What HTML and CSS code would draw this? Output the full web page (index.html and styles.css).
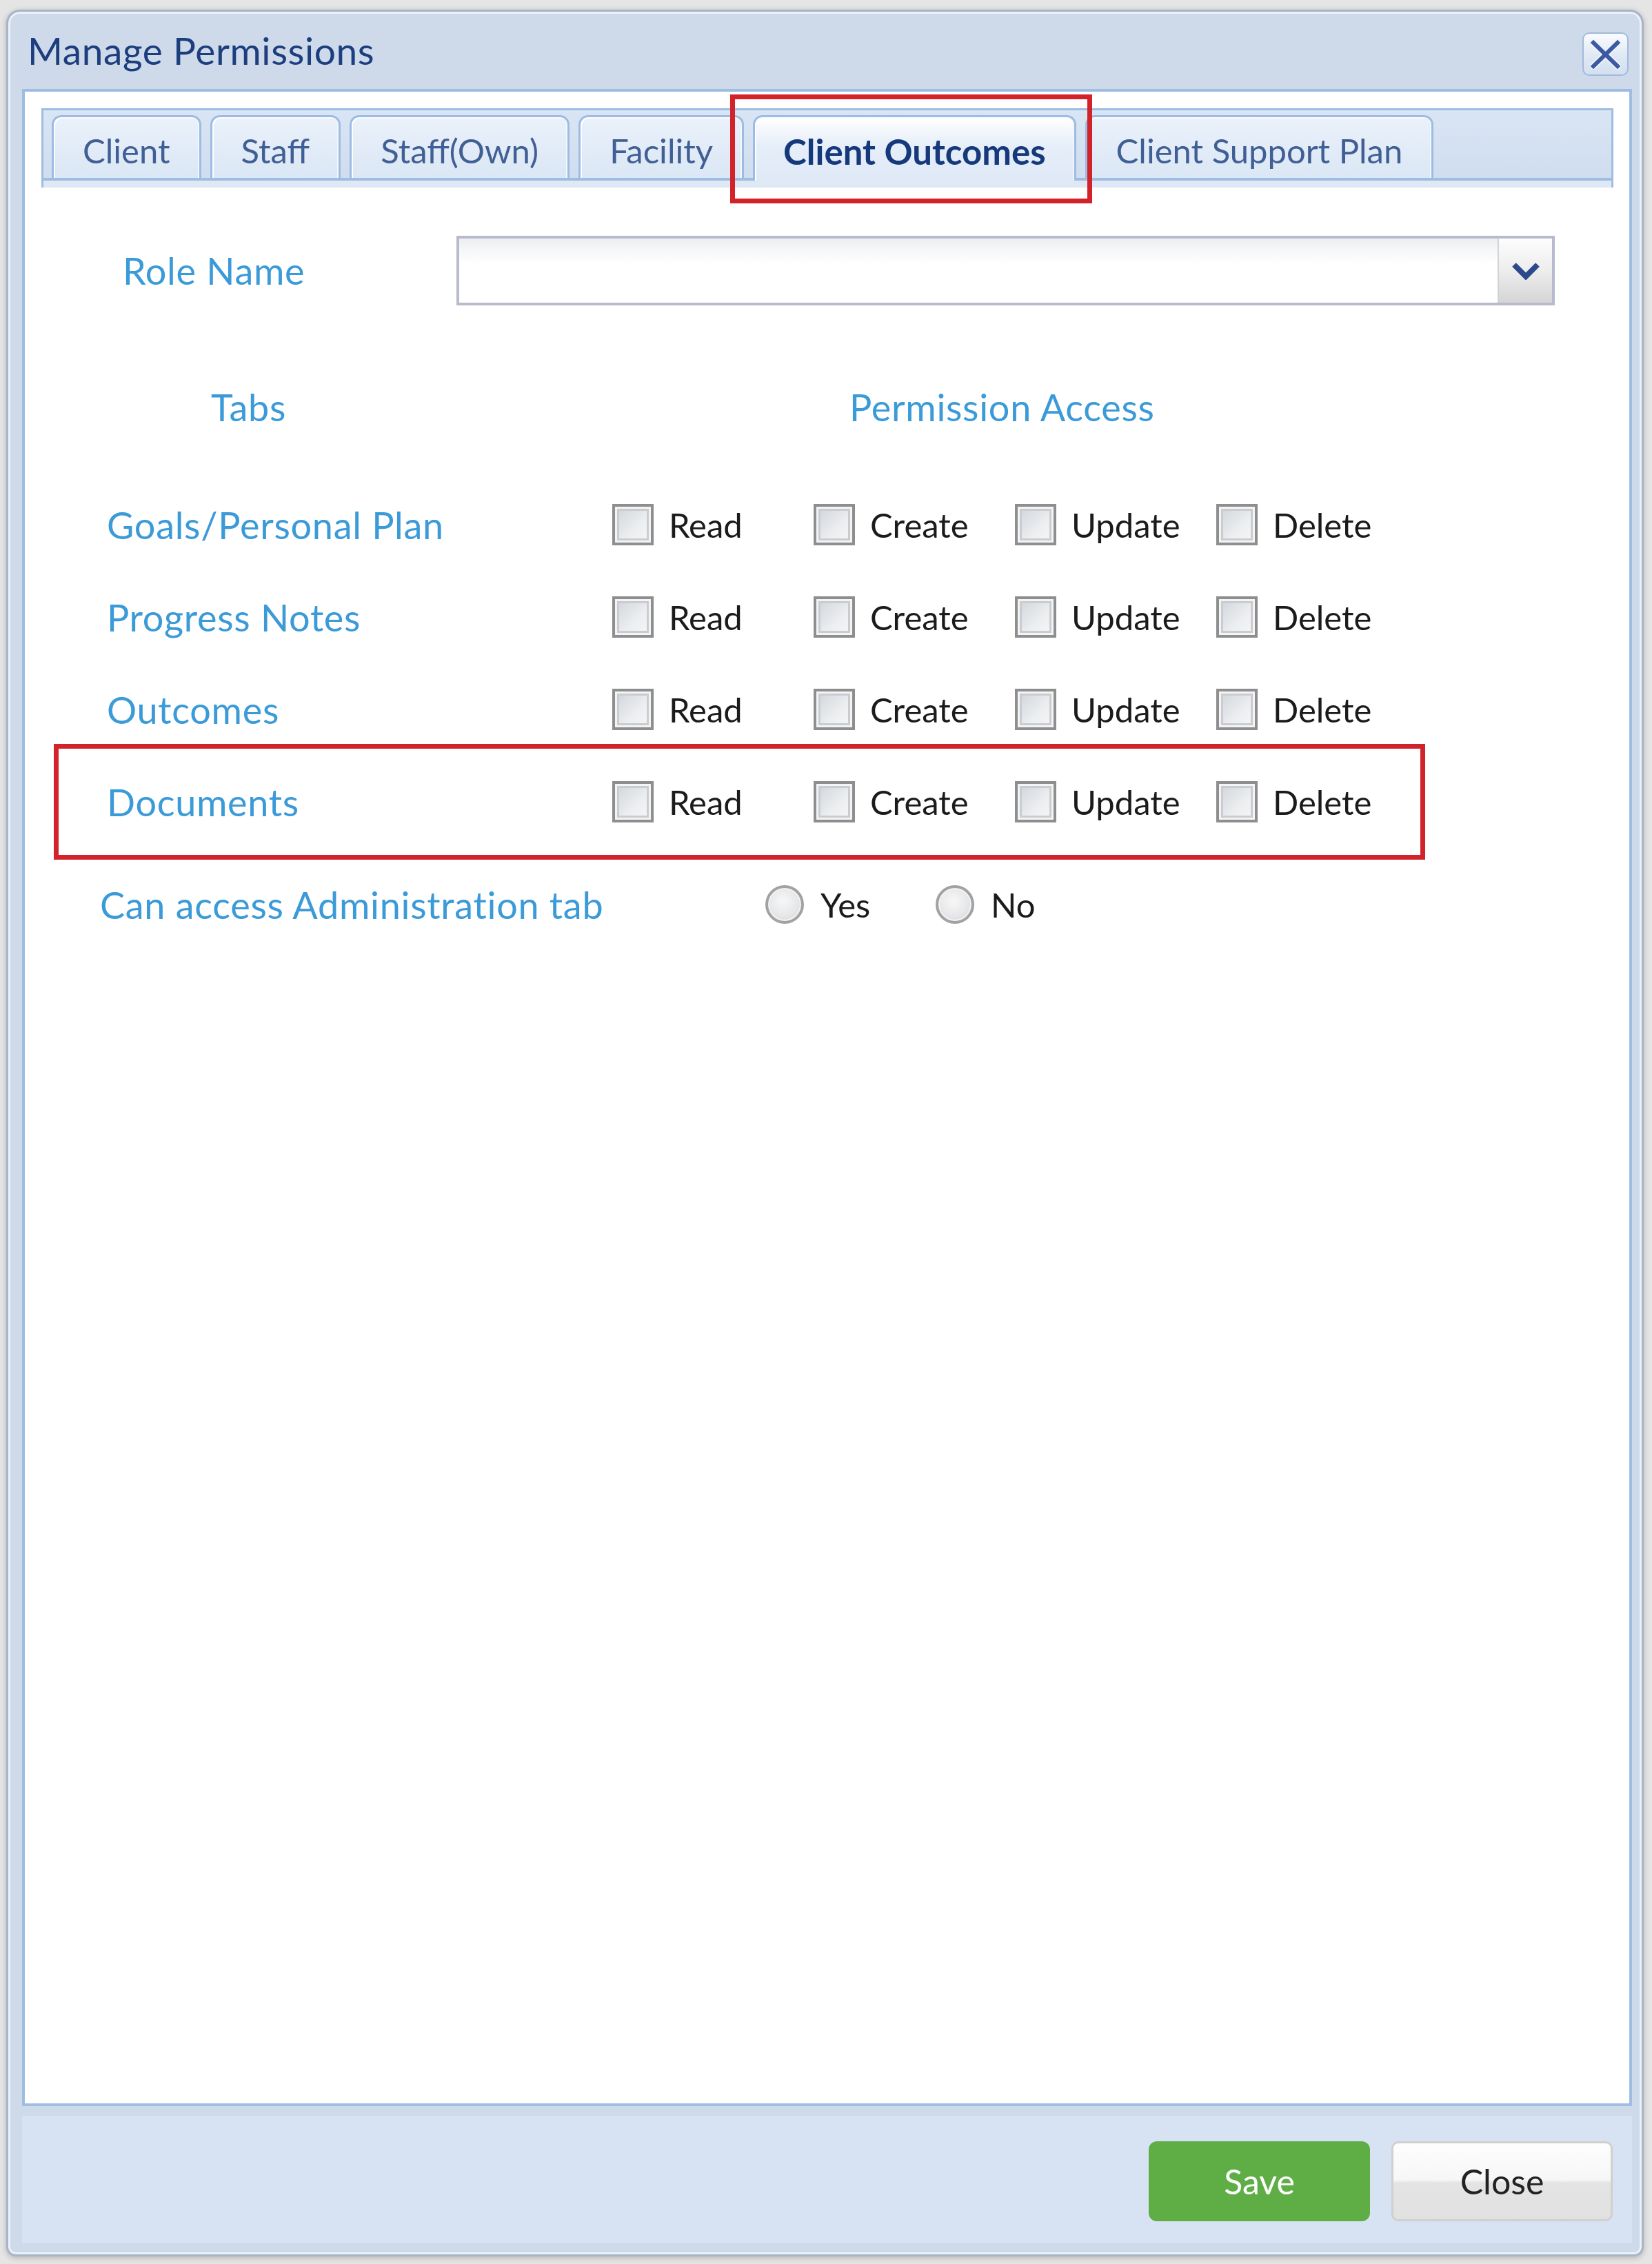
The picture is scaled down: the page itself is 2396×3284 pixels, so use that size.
FILE: index.html
```html
<!DOCTYPE html>
<html lang="en">
<head>
<meta charset="utf-8">
<title>Manage Permissions</title>
<link rel="stylesheet" href="styles.css">
</head>
<body>
<div class="window">
  <div class="titlebar">
    <span class="title">Manage Permissions</span>
    <button class="close-x" aria-label="Close">
      <svg width="67" height="63" viewBox="0 0 67 63">
        <path d="M16 15 L51 49 M51 15 L16 49" stroke="#eef3fa" stroke-width="10" stroke-linecap="round" fill="none"/>
        <path d="M16 15 L51 49 M51 15 L16 49" stroke="#3b5aa3" stroke-width="6" stroke-linecap="square" fill="none"/>
      </svg>
    </button>
  </div>

  <div class="panel">
    <div class="tabstrip">
      <div class="tabs">
        <div class="tab">Client</div>
        <div class="tab">Staff</div>
        <div class="tab">Staff(Own)</div>
        <div class="tab">Facility</div>
        <div class="tab active">Client Outcomes</div>
        <div class="tab">Client Support Plan</div>
      </div>
      <div class="band"></div>
    </div>

    <div class="role-row">
      <span class="role-label">Role Name</span>
      <div class="combo">
        <div class="combo-input"></div>
        <div class="combo-trigger">
          <svg width="44" height="26" viewBox="0 0 44 26">
            <path d="M5 4 L22 21 L39 4" stroke="#2c4a8b" stroke-width="8" fill="none" stroke-linejoin="miter"/>
          </svg>
        </div>
      </div>
    </div>

    <div class="header-row">
      <span class="hdr-tabs">Tabs</span>
      <span class="hdr-perm">Permission Access</span>
    </div>

    <div class="perm-row">
      <span class="perm-name">Goals/Personal Plan</span>
      <div class="perm-opts">
        <label class="opt"><span class="cb"></span>Read</label>
        <label class="opt"><span class="cb"></span>Create</label>
        <label class="opt"><span class="cb"></span>Update</label>
        <label class="opt"><span class="cb"></span>Delete</label>
      </div>
    </div>
    <div class="perm-row">
      <span class="perm-name">Progress Notes</span>
      <div class="perm-opts">
        <label class="opt"><span class="cb"></span>Read</label>
        <label class="opt"><span class="cb"></span>Create</label>
        <label class="opt"><span class="cb"></span>Update</label>
        <label class="opt"><span class="cb"></span>Delete</label>
      </div>
    </div>
    <div class="perm-row">
      <span class="perm-name">Outcomes</span>
      <div class="perm-opts">
        <label class="opt"><span class="cb"></span>Read</label>
        <label class="opt"><span class="cb"></span>Create</label>
        <label class="opt"><span class="cb"></span>Update</label>
        <label class="opt"><span class="cb"></span>Delete</label>
      </div>
    </div>
    <div class="perm-row highlight">
      <span class="perm-name">Documents</span>
      <div class="perm-opts">
        <label class="opt"><span class="cb"></span>Read</label>
        <label class="opt"><span class="cb"></span>Create</label>
        <label class="opt"><span class="cb"></span>Update</label>
        <label class="opt"><span class="cb"></span>Delete</label>
      </div>
    </div>

    <div class="admin-row">
      <span class="admin-label">Can access Administration tab</span>
      <label class="radio-opt yes"><span class="radio"></span>Yes</label>
      <label class="radio-opt"><span class="radio"></span>No</label>
    </div>
  </div>

  <div class="footer">
    <button class="btn btn-save">Save</button>
    <button class="btn btn-close">Close</button>
  </div>
</div>
</body>
</html>
```

FILE: styles.css
```css
html, body {
  margin: 0;
  padding: 0;
}

body {
  background: #e5e5e5;
  font-family: Lato, "Open Sans", sans-serif;
  width: 2396px;
  height: 3284px;
  overflow: hidden;
}

.window {
  box-sizing: border-box;
  width: 2375px;
  height: 3259px;
  margin: 14px 0 0 9px;
  border: 3px solid #a7b5ca;
  border-radius: 20px 20px 14px 14px;
  background: #cedae9;
  box-shadow: inset 0 0 0 3px #ecf1f8, 0 2px 8px rgba(0, 0, 0, 0.22);
  display: flex;
  flex-direction: column;
}

/* ---------- title bar ---------- */
.titlebar {
  height: 112px;
  flex: none;
  display: flex;
  align-items: center;
  padding: 0 19px 0 28px;
}

.title {
  flex: 1;
  font-size: 55px;
  letter-spacing: 0.6px;
  color: #1c3e7e;
  line-height: 1.2;
}

.close-x {
  align-self: flex-start;
  margin-top: 30px;
  box-sizing: border-box;
  width: 67px;
  height: 63px;
  padding: 0;
  border: 2px solid #a3badb;
  border-radius: 10px;
  background: linear-gradient(#fafcfe, #dfe8f4 55%, #d3e0f0);
  display: flex;
  align-items: center;
  justify-content: center;
  overflow: hidden;
}

.close-x svg {
  display: block;
  flex: none;
}

/* ---------- panel ---------- */
.panel {
  flex: 1;
  margin: 0 14px 0 20px;
  border: 4px solid #9ebde3;
  background: #fff;
  display: flex;
  flex-direction: column;
}

.tabstrip {
  margin: 24px 23px 0 24px;
  border: 3px solid #9ebde3;
  border-bottom: 0;
  background: linear-gradient(#d9e5f4, #cfdcee);
}

.tabs {
  height: 91px;
  padding: 7px 0 0 12px;
  display: flex;
  align-items: flex-end;
}

.tab {
  box-sizing: border-box;
  height: 91px;
  padding: 8px 42px 0;
  margin-right: 13px;
  border: 3px solid #9dbce3;
  border-bottom: 0;
  border-radius: 14px 14px 0 0;
  background: linear-gradient(#eaf1fa, #dbe7f5);
  box-shadow: inset 2px 2px 0 #fbfdff, inset -2px 0 0 #f3f7fc;
  font-size: 49px;
  color: #405f95;
  display: flex;
  align-items: center;
  white-space: nowrap;
}

.tab.active {
  position: relative;
  z-index: 1;
  height: 95px;
  margin-bottom: -4px;
  padding: 6px 41px 0;
  background: linear-gradient(#ffffff, #e6eef9 45%, #dfe9f6);
  font-weight: bold;
  font-size: 51px;
  color: #15397b;
}

.tab.active::after {
  content: "";
  position: absolute;
  left: -36px;
  right: -26px;
  top: -33px;
  bottom: -33px;
  border: 7px solid #d2232a;
  pointer-events: none;
}

.band {
  height: 10px;
  border-top: 4px solid #9ebde3;
  background: #dfe9f6;
}

/* ---------- role ---------- */
.role-row {
  margin-top: 70px;
  height: 101px;
  padding-left: 142px;
  display: flex;
  align-items: center;
}

.role-label,
.header-row,
.perm-name,
.admin-label {
  font-size: 54px;
  letter-spacing: 0.7px;
  color: #3b9ad8;
}

.role-label {
  width: 484px;
  flex: none;
}

.combo {
  flex: 1;
  margin-right: 108px;
  box-sizing: border-box;
  height: 101px;
  border: 4px solid #b7bbcd;
  display: flex;
  background: linear-gradient(#eceff1, #ffffff 36px);
}

.combo-input {
  flex: 1;
}

.combo-trigger {
  width: 77px;
  border-left: 2px solid #cfd2d8;
  background: linear-gradient(#fdfdfd, #ededed 50%, #d5d5d5);
  display: flex;
  align-items: center;
  justify-content: center;
}

.combo-trigger svg {
  display: block;
}

/* ---------- header ---------- */
.header-row {
  margin-top: 107px;
  height: 80px;
  padding-left: 270px;
  display: flex;
  align-items: center;
}

.hdr-tabs {
  width: 926px;
  flex: none;
}

/* ---------- permission rows ---------- */
.perm-row {
  height: 134px;
  padding-left: 119px;
  display: flex;
  align-items: center;
}

.header-row + .perm-row {
  margin-top: 64px;
}

.perm-row.highlight {
  position: relative;
}

.perm-row.highlight::after {
  content: "";
  position: absolute;
  left: 42px;
  right: 296px;
  top: -17px;
  bottom: -17px;
  border: 7px solid #d2232a;
  pointer-events: none;
}

.perm-name {
  width: 733px;
  flex: none;
}

.perm-opts {
  display: grid;
  grid-template-columns: repeat(4, 292px);
}

.opt {
  display: flex;
  align-items: center;
  gap: 22px;
  font-size: 49px;
  color: #1b1b1b;
}

.cb {
  box-sizing: border-box;
  width: 60px;
  height: 60px;
  flex: none;
  border: 4px solid #8e8e8e;
  background: linear-gradient(135deg, #cfd3d9, #eceef0 60%, #f7f7f7);
  box-shadow: inset 0 0 0 3px #f4f4f4, inset 0 0 0 6px #c9cdd2;
}

/* ---------- admin row ---------- */
.admin-row {
  margin-top: 42px;
  height: 80px;
  padding-left: 109px;
  display: flex;
  align-items: center;
}

.admin-label {
  width: 965px;
  flex: none;
}

.radio-opt {
  display: flex;
  align-items: center;
  gap: 24px;
  font-size: 49px;
  color: #1b1b1b;
}

.radio-opt.yes {
  width: 247px;
}

.radio {
  box-sizing: border-box;
  width: 56px;
  height: 56px;
  flex: none;
  border-radius: 50%;
  border: 4px solid #a2a2a2;
  background: radial-gradient(circle at 45% 40%, #f7f7f7, #e6e7e9 55%, #cfd1d4);
  box-shadow: inset 0 0 0 2px #f3f3f3;
}

/* ---------- footer ---------- */
.footer {
  flex: none;
  box-sizing: border-box;
  height: 185px;
  margin: 14px 14px 16px 20px;
  padding: 37px 28px 0 0;
  background: #d7e3f2;
  display: flex;
  justify-content: flex-end;
  align-items: flex-start;
  gap: 31px;
}

.btn {
  box-sizing: border-box;
  width: 321px;
  height: 116px;
  font-family: inherit;
  font-size: 50px;
  padding: 0;
  cursor: pointer;
}

.btn-save {
  border: 0;
  border-radius: 12px;
  background: #5fae45;
  color: #ffffff;
}

.btn-close {
  border: 3px solid #d0d0d0;
  border-radius: 10px;
  background: linear-gradient(#fdfdfd 0%, #f7f7f7 48%, #e4e4e4 52%, #e1e1e1 100%);
  color: #222222;
}
```
